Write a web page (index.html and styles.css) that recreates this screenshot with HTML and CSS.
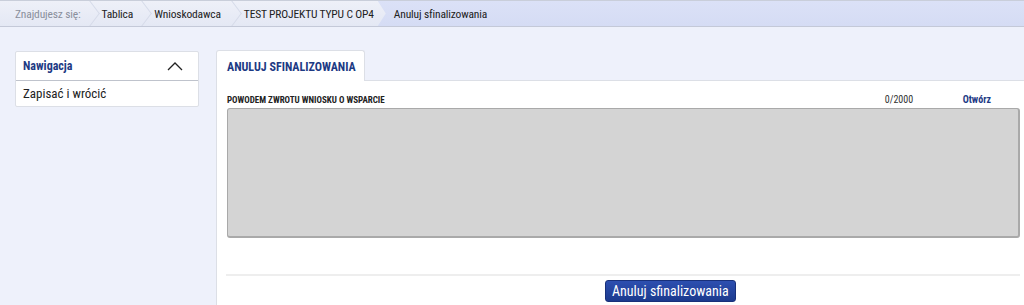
FILE: index.html
```html
<!DOCTYPE html>
<html lang="pl">
<head>
<meta charset="utf-8">
<title>Anuluj sfinalizowania</title>
<link rel="stylesheet" href="styles.css">
</head>
<body>
<nav class="crumbs">
  <span class="crumb crumb-label">Znajdujesz się:</span>
  <span class="crumb">Tablica</span>
  <span class="crumb">Wnioskodawca</span>
  <span class="crumb crumb-last">TEST PROJEKTU TYPU C OP4</span>
  <span class="crumb crumb-current">Anuluj sfinalizowania</span>
</nav>
<div class="main">
  <aside class="side">
    <div class="navbox">
      <div class="navbox-head">
        <span>Nawigacja</span>
        <svg class="chev" width="16" height="10" viewBox="0 0 16 10"><path d="M1 9 L8 2 L15 9" fill="none" stroke="#222" stroke-width="1.3"/></svg>
      </div>
      <div class="navbox-item">Zapisać i wrócić</div>
    </div>
  </aside>
  <section class="content">
    <div class="tabs"><div class="tab">ANULUJ SFINALIZOWANIA</div></div>
    <div class="panel">
      <div class="field-head">
        <span class="field-label">POWODEM ZWROTU WNIOSKU O WSPARCIE</span>
        <span class="field-count">0/2000</span>
        <a class="field-open">Otwórz</a>
      </div>
      <div class="textarea"></div>
      <div class="actions">
        <button class="btn">Anuluj sfinalizowania</button>
      </div>
    </div>
  </section>
</div>
</body>
</html>
```
FILE: styles.css
```css
html, body {
  margin: 0;
  padding: 0;
}
body {
  background: #eef1fb;
  font-family: "Liberation Sans Narrow", "Roboto Condensed", "Roboto", sans-serif;
  font-size: 12px;
  color: #222;
  height: 305px;
  overflow: hidden;
}
.crumbs {
  display: flex;
  height: 25px;
  border-top: 1px solid #c9ceda;
  border-bottom: 1px solid #c4c9d8;
  background: linear-gradient(#eef0f8, #e4e8f4);
  overflow: hidden;
}
.crumb {
  position: relative;
  display: flex;
  align-items: center;
  font-size: 11.5px;
  letter-spacing: -0.15px;
  color: #222;
  white-space: nowrap;
}
.crumb::after {
  content: "";
  position: absolute;
  right: 4px;
  top: 4px;
  width: 16px;
  height: 16px;
  border-top: 1px solid #d6dbe9;
  border-right: 1px solid #d6dbe9;
  transform: rotate(45deg) skew(8deg, 8deg);
}
.crumb-label {
  color: #8a8f9c;
  padding-left: 15px;
  padding-right: 21px;
}
.crumb:nth-child(2) { padding-right: 21px; }
.crumb:nth-child(3) { padding-right: 23px; }
.crumb-last { padding-right: 4px; }
.crumb-last::after { display: none; }
.crumb-current {
  flex: 1;
  padding-left: 16px;
  background: linear-gradient(#dbe1f7, #d5dcf4);
  clip-path: polygon(0 0, 100% 0, 100% 100%, 0 100%, 8px 50%);
}
.crumb-current::after { display: none; }

.main {
  display: flex;
  gap: 17px;
  padding: 22px 0 0 15px;
}
.side {
  width: 184px;
  flex: none;
  padding-top: 2px;
}
.navbox {
  background: #fff;
  border: 1px solid #dcdfe6;
  border-radius: 2px;
}
.navbox-head {
  display: flex;
  align-items: center;
  justify-content: space-between;
  height: 28px;
  padding: 0 15px 0 7px;
  border-bottom: 1px solid #bfc3cc;
  font-weight: bold;
  color: #1d3a84;
}
.navbox-item {
  height: 25px;
  display: flex;
  align-items: center;
  padding-left: 7px;
  font-size: 13px;
}
.content {
  flex: 1;
  min-width: 0;
}
.tabs {
  display: flex;
  padding-top: 1px;
}
.tab {
  height: 31px;
  box-sizing: border-box;
  padding: 9px 8px 0 10px;
  white-space: nowrap;
  background: #fff;
  border: 1px solid #dcdfe6;
  border-bottom: none;
  border-radius: 3px 3px 0 0;
  font-weight: bold;
  color: #1d3a84;
  font-size: 12px;
  margin-bottom: -1px;
  position: relative;
  z-index: 1;
}
.panel {
  background: #fff;
  border-top: 1px solid #dcdfe6;
  border-left: 1px solid #dcdfe6;
  padding: 13px 4px 10px 10px;
}
.field-head {
  display: flex;
  align-items: baseline;
  height: 14px;
  padding-right: 29px;
}
.field-label {
  font-weight: bold;
  flex: 1;
  font-size: 9px;
}
.field-count {
  width: 78px;
  font-size: 10px;
  color: #333;
}
.field-open {
  font-weight: bold;
  color: #1d3a84;
  font-size: 10px;
}
.textarea {
  height: 127px;
  background: #d4d4d4;
  border: 1px solid #a9a9a9;
  border-right-width: 2px;
  border-bottom-width: 2px;
  border-radius: 3px;
}
.actions {
  margin-top: 36px;
  margin-left: -1px;
  border-top: 2px solid #eeeeee;
  display: flex;
  padding: 4px 0 0 379px;
}
.btn {
  font-family: inherit;
  font-size: 14px;
  color: #fff;
  background: linear-gradient(#2d4fb0, #1c3a8e);
  border: 1px solid #18307a;
  border-radius: 3px;
  height: 22px;
  padding: 0 6px;
  line-height: 19px;
}
```
